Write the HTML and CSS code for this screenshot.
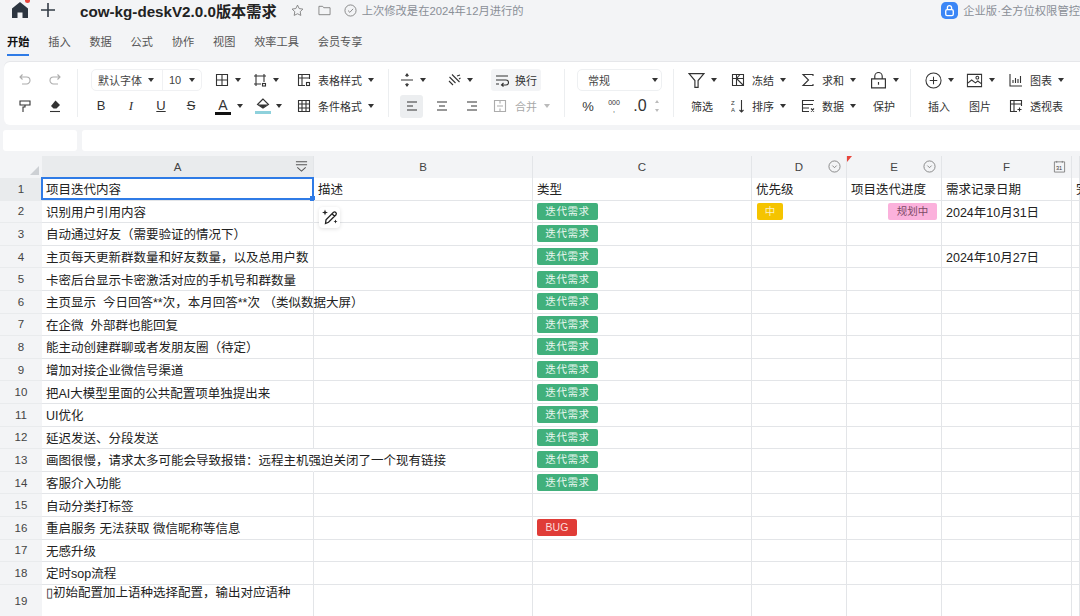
FILE: index.html
```html
<!DOCTYPE html>
<html lang="zh-CN">
<head>
  <meta charset="UTF-8" />
  <title>cow-kg-deskV2.0.0版本需求</title>
  <link rel="stylesheet" href="styles.css">
</head>
<body>

  <!-- 顶部标题栏 -->
  <header class="topbar">
    <span class="home">
      <svg class="home-icon" viewBox="0 0 18 18"><path d="M9 1 1 7.500V17h5.500v-5.500h5V17H17V7.500z" fill="#2c3540"/></svg>
      <span class="red-dot"></span>
    </span>
    <svg class="plus-icon" viewBox="0 0 16 16"><path d="M8 1v14M1 8h14" stroke="#333b46" stroke-width="1.6" fill="none"/></svg>
    <span class="doc-title">cow-kg-deskV2.0.0版本需求</span>
    <svg class="top-icon star" viewBox="0 0 14 14"><path d="m7 1.200 1.800 3.700 4 .6-2.900 2.800.7 4L7 10.500l-3.600 1.800.7-4L1.200 5.500l4-.6z" class="ln"/></svg>
    <svg class="top-icon folder" viewBox="0 0 14 14"><path d="M1 2.500h4l1.200 1.500H13v7.500H1z" class="ln"/></svg>
    <svg class="top-icon check" viewBox="0 0 14 14"><circle cx="7" cy="7" r="6" class="ln"/><path d="m4.300 7 2 2 3.500-3.800" class="ln"/></svg>
    <span class="saved">上次修改是在2024年12月进行的</span>
    <span class="promo">
      <svg class="promo-icon" viewBox="0 0 18 18"><rect width="18" height="18" rx="5" fill="#3b86f6"/><rect x="5" y="8" width="8" height="6.500" rx="1.500" fill="none" stroke="#fff" stroke-width="1.400"/><path d="M6.800 8V6a2.200 2.200 0 0 1 4.400 0v2" fill="none" stroke="#fff" stroke-width="1.400"/></svg>
      企业版·全方位权限管控
    </span>
  </header>

  <nav class="tabs">
    <span class="tab active">开始</span>
    <span class="tab">插入</span>
    <span class="tab">数据</span>
    <span class="tab">公式</span>
    <span class="tab">协作</span>
    <span class="tab">视图</span>
    <span class="tab">效率工具</span>
    <span class="tab">会员专享</span>
  </nav>

  <!-- 工具栏 -->
  <section class="ribbon">
    <div class="group g-history">
      <div class="rrow">
        <span class="tool w30 faded"><svg class="ic" viewBox="0 0 14 14"><path d="M4.500 1.500 2 4l2.500 2.500M2 4h6.500a3.500 3.500 0 0 1 0 7H4" class="ln"/></svg></span>
        <span class="tool w30 faded"><svg class="ic" viewBox="0 0 14 14"><path d="M9.500 1.500 12 4 9.500 6.500M12 4H5.500a3.500 3.500 0 0 0 0 7H10" class="ln"/></svg></span>
      </div>
      <div class="rrow">
        <span class="tool w30"><svg class="ic" viewBox="0 0 14 14"><path d="M2 2h10v4H2zM7 6v2H5v5" class="ln"/></svg></span>
        <span class="tool w30"><svg class="ic" viewBox="0 0 14 14"><path d="m7.500 1.500 4.500 4.500-3.500 3.500h-3L3 7z" fill="#333"/><path d="M2 12.500h10" class="ln"/></svg></span>
      </div>
    </div>

    <div class="group g-font">
      <div class="rrow">
        <span class="font-box">
          <span class="font-name">默认字体<i class="caret"></i></span>
          <span class="font-size">10<i class="caret"></i></span>
        </span>
        <span class="tool w38"><svg class="ic" viewBox="0 0 14 14"><path d="M1.500 1.500h11v11h-11zM7 1.500v11M1.500 7h11" class="ln"/></svg><i class="caret"></i></span>
        <span class="tool w44"><svg class="ic" viewBox="0 0 14 14"><path d="M3 1v12M11 1v8M1 3h12M1 11h7" class="ln"/><rect x="9.500" y="10.500" width="3" height="2.500" class="ln"/></svg><i class="caret"></i></span>
        <span class="tool"><svg class="ic" viewBox="0 0 14 14"><path d="M12.500 6V1.500h-11v11H8M1.500 5h11M5 1.500v11" class="ln"/><rect x="9.500" y="9.500" width="3" height="3" class="ln"/></svg><span class="lbl">表格样式</span><i class="caret"></i></span>
      </div>
      <div class="rrow">
        <span class="fmt-list w124">
          <span class="fmt fmt-b">B</span>
          <span class="fmt fmt-i">I</span>
          <span class="fmt fmt-u">U</span>
          <span class="fmt fmt-s">S</span>
        </span>
        <span class="tool w38">
          <span class="color-a">A</span><i class="caret"></i>
        </span>
        <span class="tool w44 fill-tool">
          <span class="fill-wrap">
            <svg class="ic" viewBox="0 0 14 12"><path d="M7 1 1.500 6.500 7 10l5.500-3.500z" class="ln"/><path d="M2.500 6.500h9L7 10z" fill="#333"/></svg>
            <span class="fill-bar"></span>
          </span>
          <i class="caret"></i>
        </span>
        <span class="tool"><svg class="ic" viewBox="0 0 14 14"><path d="M1.500 1.500h11v11h-11zM5 1.500v11M9 1.500v11M1.500 5h11M1.500 9h11" class="ln"/></svg><span class="lbl">条件格式</span><i class="caret"></i></span>
      </div>
    </div>

    <div class="group g-align">
      <div class="rrow">
        <span class="tool w47"><svg class="ic" viewBox="0 0 14 14"><path d="M1 7h12M7 1v3M7 10v3M5.500 3 7 1l1.500 2M5.500 11 7 13l1.500-2" class="ln"/></svg><i class="caret"></i></span>
        <span class="tool w44"><svg class="ic" viewBox="0 0 14 14"><path d="M5 1.500 12.500 9M2.500 4l6 6M2 8l4 4M10 3l3-1M12 6l1.500-1" class="ln"/></svg><i class="caret"></i></span>
        <span class="tool wrap-btn"><svg class="ic" viewBox="0 0 14 14"><path d="M1 3h12M1 7h10a2.500 2.500 0 0 1 0 5H7M1 11h3M8.500 10 6.500 12l2 1.500" class="ln"/></svg><span class="lbl">换行</span></span>
      </div>
      <div class="rrow">
        <span class="align-btn on"><svg class="ic" viewBox="0 0 14 14"><path d="M2 3h10M2 7h6M2 11h10" class="ln"/></svg></span>
        <span class="align-btn"><svg class="ic" viewBox="0 0 14 14"><path d="M2 3h10M4 7h6M2 11h10" class="ln"/></svg></span>
        <span class="align-btn"><svg class="ic" viewBox="0 0 14 14"><path d="M2 3h10M6 7h6M2 11h10" class="ln"/></svg></span>
        <span class="tool merge faded"><svg class="ic" viewBox="0 0 14 14"><path d="M1.500 1.500h11v11h-11zM7 1.500v3M7 9.500v3M4 7h6" class="ln"/></svg><span class="lbl">合并</span><i class="caret"></i></span>
      </div>
    </div>

    <div class="group g-number">
      <div class="rrow">
        <span class="num-select">常规<i class="caret"></i></span>
      </div>
      <div class="rrow">
        <span class="num-btn pct">%</span>
        <span class="num-btn thou">000<br>,</span>
        <span class="num-btn dec">.0</span>
        <span class="stepper"><i></i><i></i></span>
      </div>
    </div>

    <div class="group g-data">
      <div class="rrow">
        <span class="tool w43"><svg class="ic big" viewBox="0 0 16 16"><path d="M1 1.500h14L9.500 8v6.500h-3V8z" class="ln"/></svg><i class="caret"></i></span>
        <span class="tool w70"><svg class="ic" viewBox="0 0 14 14"><path d="M1.500 1.500h11v11h-11zM5.500 1.500v11M1.500 5.500h11M5.500 5.500l7 7M9 1.500l-3.500 4" class="ln"/></svg><span class="lbl">冻结</span><i class="caret"></i></span>
        <span class="tool w69"><svg class="ic" viewBox="0 0 14 14"><path d="M12 3V1.500H2L7.500 7 2 12.500h10V11" class="ln"/></svg><span class="lbl">求和</span><i class="caret"></i></span>
        <span class="tool"><svg class="ic big" viewBox="0 0 16 16"><path d="M1.500 6.500h13v8.500h-13zM4.500 6.500V4a3.500 3.500 0 0 1 7 0v2.500M8 9.500v2.500" class="ln"/></svg><i class="caret"></i></span>
      </div>
      <div class="rrow">
        <span class="tool w43 text-only">筛选</span>
        <span class="tool w70"><svg class="ic" viewBox="0 0 14 14"><path d="M10.500 1v12M8.500 11l2 2 2-2" class="ln"/><text x="0" y="6" class="mini">Z</text><text x="0" y="13" class="mini">A</text></svg><span class="lbl">排序</span><i class="caret"></i></span>
        <span class="tool w69"><svg class="ic" viewBox="0 0 14 14"><path d="M13 1.500H1.500v4H12M1.500 5.500v7H8M1.500 9H8M10 9.500l3 3M13 9.500l-3 3" class="ln"/></svg><span class="lbl">数据</span><i class="caret"></i></span>
        <span class="tool text-only">保护</span>
      </div>
    </div>

    <div class="group g-insert">
      <div class="rrow">
        <span class="tool w41"><svg class="ic big" viewBox="0 0 18 18"><circle cx="9" cy="9" r="8" class="ln"/><path d="M9 5v8M5 9h8" class="ln"/></svg><i class="caret"></i></span>
        <span class="tool w43"><svg class="ic big" viewBox="0 0 18 16"><path d="M1.500 1.500h15v13h-15zM1.500 11l4.500-3.500 4 3 2.500-2 4 3" class="ln"/><circle cx="12" cy="5" r="1.500" class="ln"/></svg><i class="caret"></i></span>
        <span class="tool"><svg class="ic" viewBox="0 0 14 14"><path d="M1 1v12h12M4 10V7M6.500 10V5M9 10V6M11.500 10V3" class="ln"/></svg><span class="lbl">图表</span><i class="caret"></i></span>
      </div>
      <div class="rrow">
        <span class="tool w41 text-only">插入</span>
        <span class="tool w43 text-only">图片</span>
        <span class="tool"><svg class="ic" viewBox="0 0 14 14"><path d="M8 12.500H1.500v-11h11V7M1.500 5h11M5 1.500v11M10.500 8.500v4M8.500 10.500h4" class="ln"/></svg><span class="lbl">透视表</span></span>
      </div>
    </div>
  </section>

  <div class="formula-bar">
    <div class="name-box"></div>
    <div class="formula-box"></div>
  </div>

  <!-- 表格 -->
  <main class="sheet">
    <div class="row head">
      <div class="corner"><i></i></div>
      <div class="col-head sel">A
        <svg class="col-icon dark" viewBox="0 0 14 14"><path d="M1 2h12M1 5h12M2.500 8 7 12l4.500-4" class="ln"/></svg>
      </div>
      <div class="col-head">B</div>
      <div class="col-head">C</div>
      <div class="col-head">D
        <svg class="col-icon" viewBox="0 0 14 14"><circle cx="7" cy="7" r="6" class="ln"/><path d="M4.700 6 7 8.300 9.300 6" class="ln"/></svg>
      </div>
      <div class="col-head">E
        <i class="comment-mark"></i>
        <svg class="col-icon" viewBox="0 0 14 14"><circle cx="7" cy="7" r="6" class="ln"/><path d="M4.700 6 7 8.300 9.300 6" class="ln"/></svg>
      </div>
      <div class="col-head">F
        <svg class="col-icon" viewBox="0 0 14 14"><path d="M1.500 2h11v11h-11zM4 1v2M10 1v2" class="ln"/><text x="3.200" y="10.500" class="mini">31</text></svg>
      </div>
      <div class="col-head"></div>
    </div>

    <div class="row sel-row">
      <div class="num">1</div>
      <div class="cell">项目迭代内容<span class="selection"><i class="handle"></i></span></div>
      <div class="cell">描述</div>
      <div class="cell">类型</div>
      <div class="cell">优先级</div>
      <div class="cell">项目迭代进度</div>
      <div class="cell">需求记录日期</div>
      <div class="cell">完</div>
    </div>
    <div class="row">
      <div class="num">2</div>
      <div class="cell">识别用户引用内容</div>
      <div class="cell"><span class="ai-btn"><svg viewBox="0 0 18 18"><path d="M4.500 15.500 5 11.800 12.500 4.300a1.800 1.800 0 0 1 2.500 2.500L7.500 14.300zM11 5.800l2.500 2.500" fill="none" stroke="#222" stroke-width="1.300"/><path d="m4 1.500.8 2.200 2.200.8-2.200.8L4 7.500l-.8-2.200L1 4.500l2.200-.8zM14.500 11.500l.6 1.400 1.400.6-1.400.6-.6 1.400-.6-1.400-1.400-.6 1.400-.6z" fill="#222"/></svg></span></div>
      <div class="cell"><span class="tag green">迭代需求</span></div>
      <div class="cell"><span class="tag yellow">中</span></div>
      <div class="cell right"><span class="tag pink">规划中</span></div>
      <div class="cell">2024年10月31日</div>
      <div class="cell"></div>
    </div>
    <div class="row">
      <div class="num">3</div>
      <div class="cell">自动通过好友（需要验证的情况下）</div>
      <div class="cell"></div>
      <div class="cell"><span class="tag green">迭代需求</span></div>
      <div class="cell"></div><div class="cell"></div><div class="cell"></div><div class="cell"></div>
    </div>
    <div class="row">
      <div class="num">4</div>
      <div class="cell">主页每天更新群数量和好友数量，以及总用户数</div>
      <div class="cell"></div>
      <div class="cell"><span class="tag green">迭代需求</span></div>
      <div class="cell"></div><div class="cell"></div>
      <div class="cell">2024年10月27日</div>
      <div class="cell"></div>
    </div>
    <div class="row">
      <div class="num">5</div>
      <div class="cell">卡密后台显示卡密激活对应的手机号和群数量</div>
      <div class="cell"></div>
      <div class="cell"><span class="tag green">迭代需求</span></div>
      <div class="cell"></div><div class="cell"></div><div class="cell"></div><div class="cell"></div>
    </div>
    <div class="row">
      <div class="num">6</div>
      <div class="cell">主页显示&nbsp;&nbsp;今日回答**次，本月回答**次 （类似数据大屏）</div>
      <div class="cell"></div>
      <div class="cell"><span class="tag green">迭代需求</span></div>
      <div class="cell"></div><div class="cell"></div><div class="cell"></div><div class="cell"></div>
    </div>
    <div class="row">
      <div class="num">7</div>
      <div class="cell">在企微&nbsp;&nbsp;外部群也能回复</div>
      <div class="cell"></div>
      <div class="cell"><span class="tag green">迭代需求</span></div>
      <div class="cell"></div><div class="cell"></div><div class="cell"></div><div class="cell"></div>
    </div>
    <div class="row">
      <div class="num">8</div>
      <div class="cell">能主动创建群聊或者发朋友圈（待定）</div>
      <div class="cell"></div>
      <div class="cell"><span class="tag green">迭代需求</span></div>
      <div class="cell"></div><div class="cell"></div><div class="cell"></div><div class="cell"></div>
    </div>
    <div class="row">
      <div class="num">9</div>
      <div class="cell">增加对接企业微信号渠道</div>
      <div class="cell"></div>
      <div class="cell"><span class="tag green">迭代需求</span></div>
      <div class="cell"></div><div class="cell"></div><div class="cell"></div><div class="cell"></div>
    </div>
    <div class="row">
      <div class="num">10</div>
      <div class="cell">把AI大模型里面的公共配置项单独提出来</div>
      <div class="cell"></div>
      <div class="cell"><span class="tag green">迭代需求</span></div>
      <div class="cell"></div><div class="cell"></div><div class="cell"></div><div class="cell"></div>
    </div>
    <div class="row">
      <div class="num">11</div>
      <div class="cell">UI优化</div>
      <div class="cell"></div>
      <div class="cell"><span class="tag green">迭代需求</span></div>
      <div class="cell"></div><div class="cell"></div><div class="cell"></div><div class="cell"></div>
    </div>
    <div class="row">
      <div class="num">12</div>
      <div class="cell">延迟发送、分段发送</div>
      <div class="cell"></div>
      <div class="cell"><span class="tag green">迭代需求</span></div>
      <div class="cell"></div><div class="cell"></div><div class="cell"></div><div class="cell"></div>
    </div>
    <div class="row">
      <div class="num">13</div>
      <div class="cell spill">画图很慢，请求太多可能会导致报错：远程主机强迫关闭了一个现有链接</div>
      <div class="cell"></div>
      <div class="cell"><span class="tag green">迭代需求</span></div>
      <div class="cell"></div><div class="cell"></div><div class="cell"></div><div class="cell"></div>
    </div>
    <div class="row">
      <div class="num">14</div>
      <div class="cell">客服介入功能</div>
      <div class="cell"></div>
      <div class="cell"><span class="tag green">迭代需求</span></div>
      <div class="cell"></div><div class="cell"></div><div class="cell"></div><div class="cell"></div>
    </div>
    <div class="row">
      <div class="num">15</div>
      <div class="cell">自动分类打标签</div>
      <div class="cell"></div><div class="cell"></div><div class="cell"></div><div class="cell"></div><div class="cell"></div><div class="cell"></div>
    </div>
    <div class="row">
      <div class="num">16</div>
      <div class="cell">重启服务&nbsp;无法获取&nbsp;微信昵称等信息</div>
      <div class="cell"></div>
      <div class="cell"><span class="tag red">BUG</span></div>
      <div class="cell"></div><div class="cell"></div><div class="cell"></div><div class="cell"></div>
    </div>
    <div class="row">
      <div class="num">17</div>
      <div class="cell">无感升级</div>
      <div class="cell"></div><div class="cell"></div><div class="cell"></div><div class="cell"></div><div class="cell"></div><div class="cell"></div>
    </div>
    <div class="row">
      <div class="num">18</div>
      <div class="cell">定时sop流程</div>
      <div class="cell"></div><div class="cell"></div><div class="cell"></div><div class="cell"></div><div class="cell"></div><div class="cell"></div>
    </div>
    <div class="row tall">
      <div class="num">19</div>
      <div class="cell">▯初始配置加上语种选择配置，输出对应语种</div>
      <div class="cell"></div><div class="cell"></div><div class="cell"></div><div class="cell"></div><div class="cell"></div><div class="cell"></div>
    </div>
  </main>

</body>
</html>
```

FILE: styles.css
```css
/* Reset & base */
* {
  box-sizing: border-box;
}
html, body {
  height: 616px;
  overflow: hidden;
}
body {
  margin: 0;
  background-color: #f3f4f6;
  color: #222;
  font-family: "Liberation Sans", "Noto Sans CJK SC", sans-serif;
  font-size: 11px;
}
.ln {
  fill: none;
  stroke: #333;
  stroke-width: 1.1;
}
.mini {
  font-size: 6px;
  fill: #333;
  font-family: "Liberation Sans", sans-serif;
}

/* Top bar */
.topbar {
  display: flex;
  align-items: center;
  height: 20px;
  padding-left: 11px;
}
.home {
  position: relative;
  display: flex;
}
.home-icon {
  width: 18px;
  height: 18px;
}
.red-dot {
  position: absolute;
  top: -3px;
  right: -1px;
  width: 5px;
  height: 5px;
  border-radius: 50%;
  background: #e8453c;
}
.plus-icon {
  width: 16px;
  height: 16px;
  margin-left: 11px;
}
.doc-title {
  margin-left: 24px;
  font-size: 15.200px;
  font-weight: 700;
  color: #222;
}
.top-icon {
  width: 13px;
  height: 13px;
}
.top-icon .ln {
  stroke: #777;
  stroke-width: 0.9;
}
.star {
  margin-left: 14px;
}
.folder {
  margin-left: 14px;
}
.check {
  margin-left: 13px;
}
.saved {
  margin-left: 5px;
  font-size: 11.300px;
  color: #8a8f96;
}
.promo {
  display: flex;
  align-items: center;
  gap: 5px;
  margin-left: auto;
  font-size: 11.300px;
  color: #8a8f96;
  white-space: nowrap;
}
.promo-icon {
  width: 17px;
  height: 17px;
}

/* Tabs */
.tabs {
  display: flex;
  height: 42px;
  padding: 13px 0 0 7px;
  color: #555;
  font-size: 11.200px;
}
.tab {
  height: 23px;
  margin-right: 18.800px;
  line-height: 18px;
}
.tab.active {
  color: #111;
  font-weight: 700;
  border-bottom: 2px solid #2f7be6;
}

/* Ribbon */
.ribbon {
  display: flex;
  height: 63px;
  margin-left: 4px;
  padding-top: 5px;
  background: #fff;
  border-radius: 6px 0 0 6px;
  box-shadow: 0 -1px 0 #e6e7ea;
}
.group {
  position: relative;
  flex: none;
}
.group::after {
  content: "";
  position: absolute;
  top: 2px;
  right: 0;
  width: 1px;
  height: 48px;
  background: #eceef0;
}
.g-history {
  width: 74px;
  padding-left: 6px;
}
.g-font {
  width: 311px;
  padding-left: 13px;
}
.g-align {
  width: 176px;
  padding-left: 11px;
}
.g-number {
  width: 109px;
  padding-left: 12px;
}
.g-data {
  width: 237px;
  padding-left: 14px;
}
.g-insert {
  flex: 1;
  padding-left: 14px;
}
.g-insert::after {
  display: none;
}
.rrow {
  display: flex;
  align-items: center;
  height: 26px;
}
.tool {
  display: flex;
  align-items: center;
  flex: none;
  color: #333;
  white-space: nowrap;
}
.tool.faded {
  opacity: 0.4;
  color: #222;
}
.w30 { width: 30px; justify-content: center; }
.w38 { width: 38px; }
.w41 { width: 41px; }
.w43 { width: 43px; }
.w44 { width: 44px; }
.w47 { width: 47px; }
.w69 { width: 69px; }
.w70 { width: 70px; }
.w124 { width: 124px; }
.ic {
  flex: none;
  width: 14px;
  height: 14px;
}
.ic.big {
  width: 17px;
  height: 17px;
}
.lbl {
  margin-left: 7px;
}
.text-only {
  padding-left: 3px;
}
.caret {
  display: inline-block;
  flex: none;
  width: 0;
  height: 0;
  margin-left: 6px;
  border-left: 3px solid transparent;
  border-right: 3px solid transparent;
  border-top: 4px solid #333;
}
.faded .caret {
  border-top-color: #555;
}

/* Font picker */
.font-box {
  display: flex;
  flex: none;
  width: 111px;
  height: 22px;
  margin-right: 13px;
  border: 1px solid #f0f1f3;
  border-radius: 5px;
  color: #444;
}
.font-name {
  display: flex;
  align-items: center;
  width: 71px;
  padding-left: 6px;
  border-right: 1px solid #f0f1f3;
}
.font-size {
  display: flex;
  align-items: center;
  padding-left: 6px;
}
.font-size .caret {
  margin-left: 8px;
}
.fmt-list {
  display: flex;
  flex: none;
  margin-left: -5px;
  margin-right: 5px;
}
.fmt {
  width: 30px;
  text-align: center;
  font-size: 13px;
  color: #333;
}
.fmt-i {
  font-family: "Liberation Serif", serif;
  font-style: italic;
}
.fmt-u {
  text-decoration: underline;
}
.fmt-s {
  text-decoration: line-through;
}
.color-a {
  width: 16px;
  font-size: 14px;
  line-height: 14px;
  text-align: center;
  border-bottom: 3px solid #111;
}
.fill-tool {
  padding-left: 2px;
}
.fill-tool .caret {
  margin-left: 5px;
}
.fill-wrap {
  display: flex;
  flex-direction: column;
  align-items: center;
  width: 16px;
}
.fill-wrap .ic {
  height: 12px;
}
.fill-bar {
  width: 16px;
  height: 3px;
  margin-top: 1px;
  background: #8ed1dc;
}

/* Align */
.wrap-btn {
  width: 50px;
  height: 22px;
  padding-left: 4px;
  background: #f3f4f6;
  border-radius: 3px;
}
.wrap-btn .lbl {
  margin-left: 6px;
}
.align-btn {
  display: flex;
  align-items: center;
  justify-content: center;
  width: 23px;
  height: 23px;
  margin-right: 7px;
  border-radius: 3px;
}
.align-btn.on {
  background: #eceef0;
}
.merge {
  margin-left: 3px;
}
.merge .lbl {
  margin-left: 8px;
}
.merge .caret {
  margin-left: 7px;
}

/* Number format */
.num-select {
  display: flex;
  align-items: center;
  justify-content: space-between;
  width: 85px;
  height: 22px;
  padding: 0 3px 0 10px;
  border: 1px solid #eef0f2;
  border-radius: 5px;
  color: #444;
}
.num-select .caret {
  border-left-width: 3.500px;
  border-right-width: 3.500px;
}
.num-btn {
  flex: none;
  text-align: center;
  color: #333;
}
.pct {
  width: 22px;
  font-size: 13px;
}
.thou {
  width: 30px;
  font-size: 7px;
  line-height: 7px;
}
.dec {
  width: 22px;
  font-size: 16px;
}
.stepper {
  display: flex;
  flex-direction: column;
  gap: 6px;
  margin-left: 4px;
}
.stepper i {
  width: 0;
  height: 0;
  border-left: 2.500px solid transparent;
  border-right: 2.500px solid transparent;
}
.stepper i:first-child {
  border-bottom: 3px solid #bbb;
}
.stepper i:last-child {
  border-top: 3px solid #bbb;
}

/* Formula bar */
.formula-bar {
  display: flex;
  gap: 5px;
  height: 26px;
  padding: 5px 0 0 3px;
}
.name-box {
  width: 74px;
  background: #fff;
  border-radius: 3px;
}
.formula-box {
  flex: 1;
  background: #fff;
  border-radius: 3px 0 0 3px;
}

/* Sheet */
.sheet {
  margin-top: 5px;
  background: #fff;
}
.row {
  display: grid;
  grid-template-columns: 42px 272px 219px 219px 95px 95px 130px 8px;
  height: 22.600px;
  font-size: 12.500px;
}
.row.head {
  height: 22px;
  background: #f3f4f6;
  font-size: 11.500px;
  color: #444;
}
.row.tall {
  height: 50px;
}
.corner {
  position: relative;
}
.corner i {
  position: absolute;
  right: 3px;
  bottom: 3px;
  width: 0;
  height: 0;
  border-left: 9px solid transparent;
  border-bottom: 9px solid #cdd0d4;
}
.col-head {
  position: relative;
  display: flex;
  align-items: center;
  justify-content: center;
  border-right: 1px solid #e3e5e8;
}
.col-head.sel {
  background: #e9ebed;
}
.col-icon {
  position: absolute;
  top: 4px;
  right: 5px;
  width: 13px;
  height: 13px;
}
.col-icon .ln {
  stroke: #777;
  stroke-width: 0.9;
}
.col-icon.dark .ln {
  stroke: #555;
  stroke-width: 1.1;
}
.comment-mark {
  position: absolute;
  top: 0;
  left: 0;
  width: 0;
  height: 0;
  border-top: 6px solid #e8453c;
  border-right: 5px solid transparent;
}
.num {
  display: flex;
  align-items: center;
  justify-content: center;
  background: #f3f4f6;
  border-bottom: 1px solid #e9ebed;
  font-size: 11.500px;
  color: #444;
}
.sel-row .num {
  background: #e9ebed;
}
.cell {
  position: relative;
  display: flex;
  align-items: center;
  padding-left: 4px;
  border-right: 1px solid #e3e5e8;
  border-bottom: 1px solid #e3e5e8;
  color: #222;
  white-space: nowrap;
}
.cell.right {
  justify-content: flex-end;
  padding-right: 4px;
}
.cell.spill {
  z-index: 1;
  border-right-color: #fff;
}
.tall .num {
  align-items: flex-start;
  padding-top: 10px;
}
.tall .cell {
  align-items: flex-start;
  line-height: 17px;
}
.selection {
  position: absolute;
  inset: -1px -1px 0 -1px;
  border: 2px solid #2f7be6;
}
.handle {
  position: absolute;
  right: -3px;
  bottom: -3px;
  width: 5px;
  height: 5px;
  background: #2f7be6;
}
.ai-btn {
  position: absolute;
  top: 6px;
  left: 5px;
  z-index: 2;
  display: flex;
  align-items: center;
  justify-content: center;
  width: 21px;
  height: 21px;
  background: #fff;
  border-radius: 4px;
  box-shadow: 0 1px 4px rgba(0,0,0,0.12);
}
.ai-btn svg {
  width: 18px;
  height: 18px;
}
.tag {
  display: inline-block;
  height: 17px;
  border-radius: 2px;
  font-size: 10.500px;
  line-height: 17px;
  text-align: center;
}
.tag.green {
  width: 61px;
  margin-left: 0;
  background: #41b07c;
  color: #eaf7f0;
  letter-spacing: 0.6px;
}
.tag.yellow {
  width: 26px;
  margin-left: 1px;
  background: #f5c400;
  color: #fdf1c0;
}
.tag.pink {
  width: 49px;
  background: #fbb1dc;
  color: #7b4a66;
}
.tag.red {
  width: 40px;
  margin-left: 0;
  background: #e03c37;
  color: #fbdedd;
}
```
